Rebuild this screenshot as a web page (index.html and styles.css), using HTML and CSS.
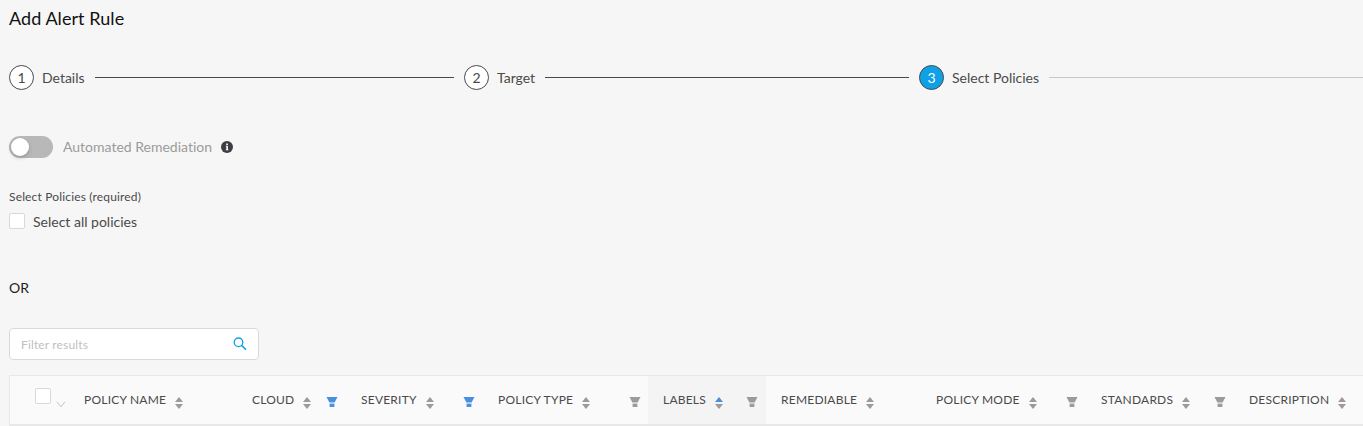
FILE: index.html
```
<!DOCTYPE html>
<html lang="en">
<head>
<meta charset="utf-8">
<title>Add Alert Rule</title>
<link rel="stylesheet" href="styles.css">
</head>
<body>
<svg width="0" height="0" class="defs">
  <symbol id="sort" viewBox="0 0 8 12"><path fill="currentColor" d="M4 0L8 5H0Z"/><path d="M0 7H8L4 12Z"/></symbol>
  <symbol id="funnel" viewBox="0 0 12 10"><path d="M.5 0h11L8.6 5.6H3.4Z"/><path d="M3.6 6.6h4.8V10H3.6Z"/></symbol>
</svg>
<h1 class="title">Add Alert Rule</h1>
<ol class="steps">
  <li class="step"><span class="num">1</span><span>Details</span><i class="line"></i></li>
  <li class="step"><span class="num">2</span><span>Target</span><i class="line"></i></li>
  <li class="step active"><span class="num">3</span><span>Select Policies</span><i class="line"></i></li>
</ol>
<div class="remediation">
  <span class="switch"><span class="knob"></span></span>
  <span>Automated Remediation</span>
  <svg class="info" width="12" height="12" viewBox="0 0 12 12"><circle cx="6" cy="6" r="6" fill="#3f3c44"/><path d="M5.2 2.4h1.7v1.5H5.2zM4.8 4.8h2.1v3.7h.6v.8H4.7v-.8h.6V5.6h-.5z" fill="#fff"/></svg>
</div>
<div class="caption">Select Policies (required)</div>
<label class="all"><span class="box"></span><span>Select all policies</span></label>
<div class="or">OR</div>
<div class="search">
  <span class="hint">Filter results</span>
  <svg width="14" height="14" viewBox="0 0 14 14" fill="none" stroke="#0fa1e6" stroke-width="1.3"><circle cx="5.5" cy="5.3" r="4.3"/><path d="M8.6 8.4L13 12.8" stroke-width="1.6"/></svg>
</div>
<div class="thead">
  <div class="pick"><span class="box"></span><svg width="10" height="7" viewBox="0 0 10 7" fill="none" stroke="#c4c4c4"><path d="M1 .8L5 5.8L9 .8"/></svg></div>
  <div class="th"><span>POLICY NAME</span><svg class="sort"><use href="#sort"/></svg></div>
  <div class="th"><span>CLOUD</span><svg class="sort"><use href="#sort"/></svg><svg class="funnel on"><use href="#funnel"/></svg></div>
  <div class="th"><span>SEVERITY</span><svg class="sort"><use href="#sort"/></svg><svg class="funnel on"><use href="#funnel"/></svg></div>
  <div class="th"><span>POLICY TYPE</span><svg class="sort"><use href="#sort"/></svg><svg class="funnel"><use href="#funnel"/></svg></div>
  <div class="th sorted"><span>LABELS</span><svg class="sort"><use href="#sort"/></svg><svg class="funnel"><use href="#funnel"/></svg></div>
  <div class="th after"><span>REMEDIABLE</span><svg class="sort"><use href="#sort"/></svg></div>
  <div class="th"><span>POLICY MODE</span><svg class="sort"><use href="#sort"/></svg><svg class="funnel"><use href="#funnel"/></svg></div>
  <div class="th"><span>STANDARDS</span><svg class="sort"><use href="#sort"/></svg><svg class="funnel"><use href="#funnel"/></svg></div>
  <div class="th"><span>DESCRIPTION</span><svg class="sort"><use href="#sort"/></svg></div>
</div>
</body>
</html>
```
FILE: styles.css
```
* { box-sizing: border-box; }
body {
  margin: 0;
  padding-left: 9px;
  height: 426px;
  overflow: hidden;
  background: #f6f6f6;
  color: #4a4a4a;
  font: 14px/20px Lato, "Liberation Sans", sans-serif;
  font-variant-ligatures: none;
}
svg { display: block; flex: none; }
.defs { position: absolute; }
.title { margin: 0; padding-top: 6px; font-size: 18px; line-height: 24px; font-weight: 400; letter-spacing: .06px; color: #111; }
.steps {
  display: grid;
  grid-template-columns: 455px 455px 455px;
  margin: 35px 0 0;
  padding: 0;
  list-style: none;
}
.step { display: flex; align-items: center; height: 25px; white-space: nowrap; }
.num {
  width: 25px;
  height: 25px;
  margin-right: 8px;
  border: 1px solid #4a4a4a;
  border-radius: 50%;
  background: #fff;
  text-align: center;
  line-height: 24px;
}
.line { flex: 1; height: 1px; margin: 0 10px; background: #4a4a4a; }
.active .num { background: #0fa1e6; color: #fff; }
.active .line { background: #c8c8c8; }
.remediation { display: flex; align-items: center; height: 22px; margin-top: 46px; color: #9b9b9b; }
.switch { width: 44px; height: 22px; padding: 2px; margin-right: 10px; border-radius: 11px; background: #b8b8b8; }
.knob { display: block; width: 18px; height: 18px; border-radius: 50%; background: #fff; box-shadow: 0 2px 4px rgba(0, 35, 11, .2); }
.info { margin-left: 9px; }
.caption { margin-top: 29px; font-size: 12px; letter-spacing: .16px; }
.all { display: flex; align-items: center; height: 20px; margin-top: 5px; gap: 8px; }
.all .box { margin-bottom: 2px; }
.box { width: 16px; height: 16px; border: 1px solid #d9d9d9; border-radius: 2px; background: #fff; }
.or { margin-top: 46px; color: #222; }
.search {
  display: flex;
  align-items: center;
  justify-content: space-between;
  width: 250px;
  height: 32px;
  margin-top: 30px;
  padding: 0 11px;
  border: 1px solid #d9d9d9;
  border-radius: 4px;
  background: #fff;
  color: #bfbfbf;
  font-size: 12px;
}
.hint { padding-top: 2px; letter-spacing: .15px; }
.thead {
  display: grid;
  grid-template-columns: 58px 168px 109px 137px 166px 118px 154px 165px 148px 134px;
  width: 1358px;
  height: 51px;
  margin-top: 15px;
  border: 1px solid #e8e8e8;
  border-bottom-width: 2px;
  background: #fafafa;
  font-size: 12px;
  letter-spacing: .22px;
}
.pick { display: flex; gap: 5px; padding: 12px 0 0 25px; }
.pick svg { margin-top: 13px; }
.th { display: flex; padding: 14px 7px 0 16px; white-space: nowrap; }
.th.sorted { padding: 14px 8px 0 15px; background: #f4f4f4; }
.th.after { padding-left: 15px; }
.sort { width: 8px; height: 12px; margin: 7px 0 0 9px; fill: #9b9b9b; color: #9b9b9b; }
.sorted .sort { color: #4a90e2; }
.funnel { width: 12px; height: 10px; margin: 7px 0 0 auto; fill: #9b9b9b; }
.funnel.on { fill: #4a90e2; }
```
